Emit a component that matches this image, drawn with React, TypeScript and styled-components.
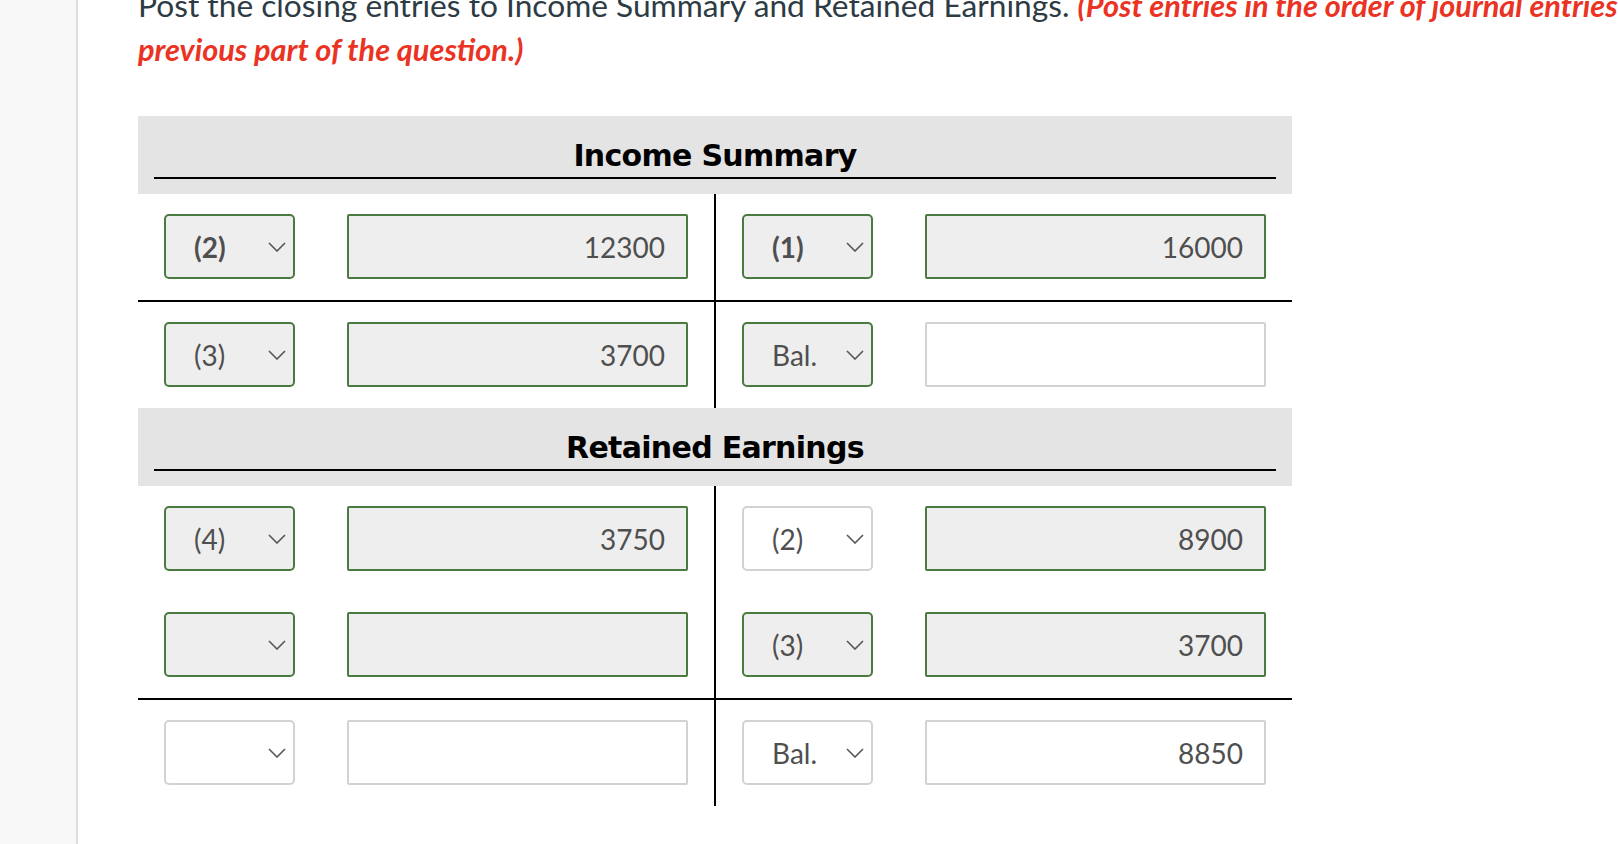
import React from "react";
import styled, { createGlobalStyle, css } from "styled-components";

const Global = createGlobalStyle`
  html, body { margin: 0; padding: 0; background: #ffffff; overflow: hidden; }
  body { font-family: Lato, "Noto Sans", sans-serif; }
`;

const Page = styled.div`
  display: flex;
  min-height: 100vh;
  width: 1618px;
`;

const Sidebar = styled.aside`
  width: 76px;
  flex: 0 0 76px;
  background: #f8f8f8;
  border-right: 2px solid #dedede;
`;

const Main = styled.main`
  flex: 1;
  padding-left: 60px;
  overflow: hidden;
`;

const Prompt = styled.p`
  margin: -17px 0 45px 0;
  font-family: Lato, sans-serif;
  font-size: 31.7px;
  line-height: 44px;
  color: #2d3b45;
  white-space: nowrap;
`;

const Note = styled.span`
  color: #ea3323;
  font-weight: 700;
  font-style: italic;
  font-size: 30.7px;
  line-height: 1;
`;

const Ledger = styled.section`
  width: 1154px;
`;

const Header = styled.div`
  background: #e4e4e4;
  height: 78px;
  padding: 0 16px;
  box-sizing: border-box;
  display: flex;
  align-items: flex-end;
  padding-bottom: 15px;
`;

const Title = styled.h2`
  flex: 1;
  margin: 0;
  font-family: "DejaVu Sans", Verdana, sans-serif;
  font-weight: 700;
  font-size: 30px;
  letter-spacing: -0.7px;
  line-height: 1;
  text-align: center;
  color: #000;
  padding-bottom: 6px;
  border-bottom: 2px solid #000;
`;

const Row = styled.div<{ $rule?: boolean }>`
  display: grid;
  grid-template-columns: 578px 576px;
  border-bottom: ${(p) => (p.$rule ? "2px solid #000" : "none")};
`;

const Cell = styled.div<{ $left?: boolean }>`
  display: flex;
  align-items: center;
  justify-content: space-between;
  padding: 20px 26px 21px;
  border-right: ${(p) => (p.$left ? "2px solid #000" : "none")};
`;

type State = "ok" | "blank";

const boxState = css<{ $state: State }>`
  ${(p) =>
    p.$state === "ok"
      ? css`
          background: #eeeeee;
          border: 2px solid #4b7a41;
        `
      : css`
          background: #ffffff;
          border: 2px solid #d2d2d2;
        `}
`;

const Select = styled.div<{ $state: State; $bold?: boolean }>`
  ${boxState}
  box-sizing: border-box;
  width: 131px;
  height: 65px;
  border-radius: 5px;
  display: flex;
  align-items: center;
  justify-content: space-between;
  padding: 0 7px 0 28px;
  font-family: Lato, sans-serif;
  font-size: 28px;
  font-weight: ${(p) => (p.$bold ? 700 : 400)};
  color: #4f4f4f;
`;

const Amount = styled.div<{ $state: State }>`
  ${boxState}
  box-sizing: border-box;
  width: 341px;
  height: 65px;
  border-radius: 2px;
  display: flex;
  align-items: center;
  justify-content: flex-end;
  padding: 0 21px;
  font-family: Lato, sans-serif;
  font-size: 28px;
  color: #4f4f4f;
`;

const Chevron = () => (
  <svg width="18" height="10" viewBox="0 0 18 10" aria-hidden="true">
    <polyline points="1,1 9,9 17,1" fill="none" stroke="#555" strokeWidth="1.6" />
  </svg>
);

type Side = { ref: string; refState: State; bold?: boolean; amt: string; amtState: State };

const Entry = ({ s, left }: { s: Side; left?: boolean }) => (
  <Cell $left={left}>
    <Select $state={s.refState} $bold={s.bold}>
      <span>{s.ref}</span>
      <Chevron />
    </Select>
    <Amount $state={s.amtState}>{s.amt}</Amount>
  </Cell>
);

type RowData = { l: Side; r: Side; rule?: boolean };

const accounts: { title: string; rows: RowData[] }[] = [
  {
    title: "Income Summary",
    rows: [
      {
        rule: true,
        l: { ref: "(2)", refState: "ok", bold: true, amt: "12300", amtState: "ok" },
        r: { ref: "(1)", refState: "ok", bold: true, amt: "16000", amtState: "ok" },
      },
      {
        l: { ref: "(3)", refState: "ok", amt: "3700", amtState: "ok" },
        r: { ref: "Bal.", refState: "ok", amt: "", amtState: "blank" },
      },
    ],
  },
  {
    title: "Retained Earnings",
    rows: [
      {
        l: { ref: "(4)", refState: "ok", amt: "3750", amtState: "ok" },
        r: { ref: "(2)", refState: "blank", amt: "8900", amtState: "ok" },
      },
      {
        rule: true,
        l: { ref: "", refState: "ok", amt: "", amtState: "ok" },
        r: { ref: "(3)", refState: "ok", amt: "3700", amtState: "ok" },
      },
      {
        l: { ref: "", refState: "blank", amt: "", amtState: "blank" },
        r: { ref: "Bal.", refState: "blank", amt: "8850", amtState: "blank" },
      },
    ],
  },
];

export default function App() {
  return (
    <>
      <Global />
      <Page>
        <Sidebar />
        <Main>
          <Prompt>
            Post the closing entries to Income Summary and Retained Earnings.{" "}
            <Note>(Post entries in the order of journal entries in the</Note>
            <br />
            <Note>previous part of the question.)</Note>
          </Prompt>
          <Ledger>
            {accounts.map((a) => (
              <React.Fragment key={a.title}>
                <Header>
                  <Title>{a.title}</Title>
                </Header>
                {a.rows.map((r, i) => (
                  <Row key={i} $rule={r.rule}>
                    <Entry s={r.l} left />
                    <Entry s={r.r} />
                  </Row>
                ))}
              </React.Fragment>
            ))}
          </Ledger>
        </Main>
      </Page>
    </>
  );
}
